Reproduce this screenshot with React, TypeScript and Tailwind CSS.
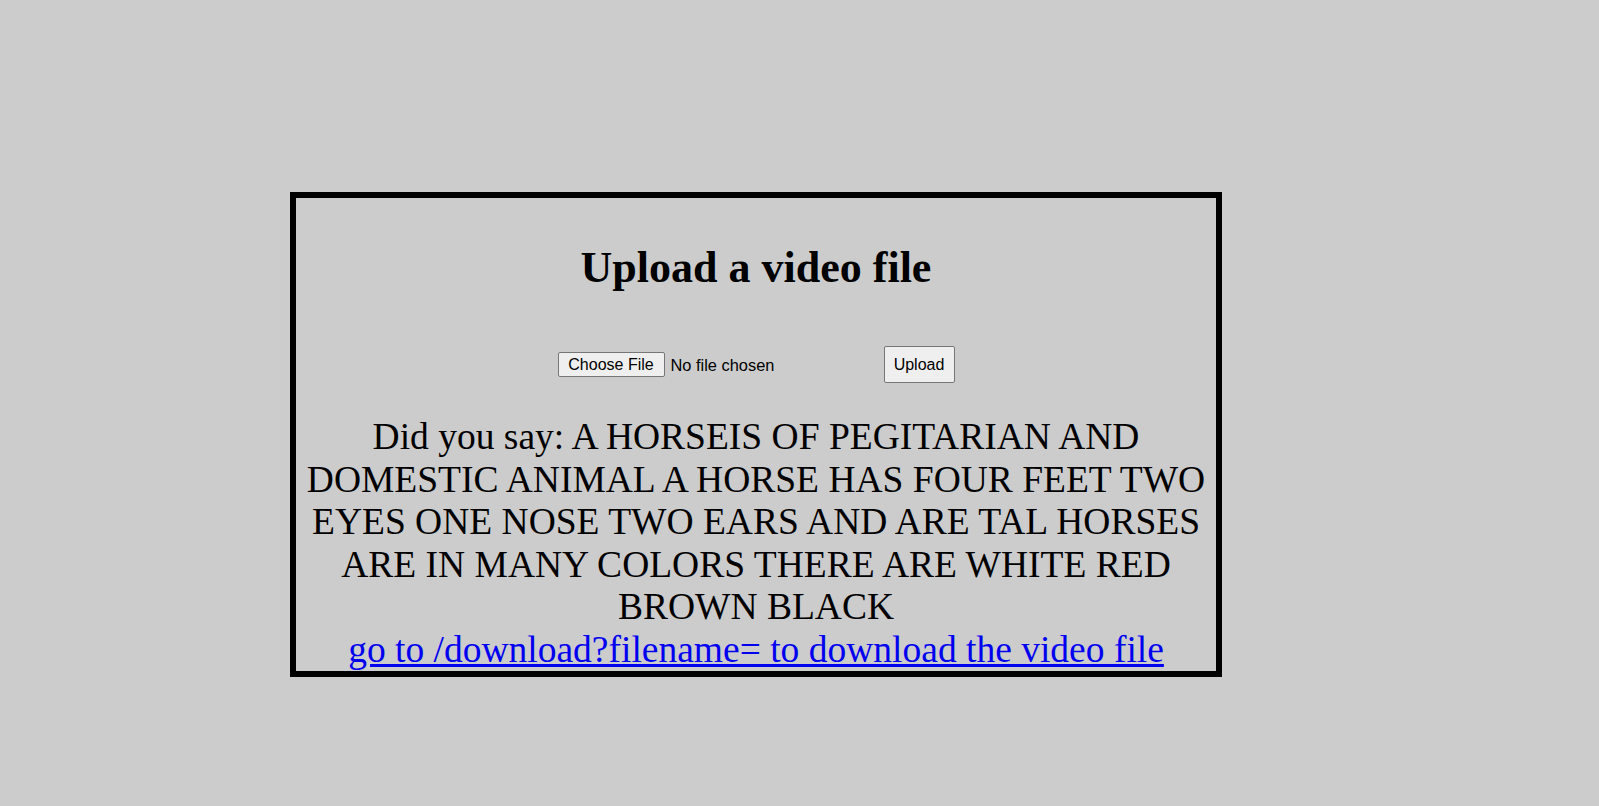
import React from "react";

export default function App() {
  return (
    <div className="min-h-screen w-full bg-[#cccccc] pt-[192px] pl-[290px]" style={{ fontFamily: '"Liberation Serif", "Times New Roman", serif' }}>
      <div className="w-[932px] border-[6px] border-black text-black">
        <h1 className="mt-[44px] text-center text-[44px] font-bold leading-[51px] font-['Liberation_Serif',serif]">
          Upload a video file
        </h1>
        <form
          className="mt-[53px] flex items-center justify-center"
          onSubmit={(e) => e.preventDefault()}
        >
          <label className="flex w-[326px] cursor-default items-center font-['Liberation_Sans',Arial,sans-serif] text-[16px] leading-[18px]">
            <span className="flex h-[25px] w-[107px] items-center justify-center rounded-[2px] border border-[#767676] bg-[#efefef] text-black">
              Choose File
            </span>
            <span className="ml-[6px] text-[16.4px] text-black">No file chosen</span>
            <input type="file" className="hidden" />
          </label>
          <button
            type="submit"
            className="flex h-[37px] w-[71px] items-center justify-center rounded-[2px] border border-[#767676] bg-[#efefef] font-['Liberation_Sans',Arial,sans-serif] text-[16px] leading-[18px] text-black"
          >
            Upload
          </button>
        </form>
        <div className="mt-[33px] text-center text-[37.5px] leading-[42.5px] font-['Liberation_Serif',serif]">
          <p>
            Did you say: A HORSEIS OF PEGITARIAN AND DOMESTIC ANIMAL A HORSE HAS FOUR FEET TWO EYES ONE NOSE TWO EARS AND ARE TAL HORSES ARE IN MANY COLORS THERE ARE WHITE RED BROWN BLACK
          </p>
          <a href="#" className="text-[#0000ee] underline">
            go to /download?filename= to download the video file
          </a>
        </div>
      </div>
    </div>
  );
}
